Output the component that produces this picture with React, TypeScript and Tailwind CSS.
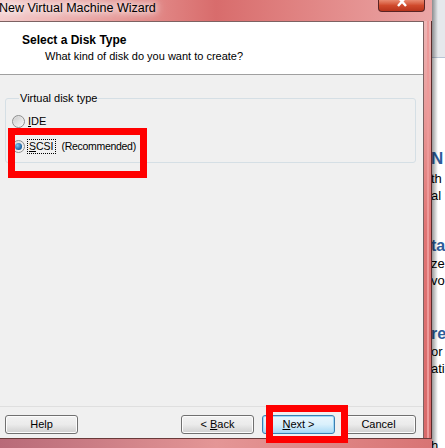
import React from 'react';

function Radio({ checked }: { checked?: boolean }) {
  return (
    <span className="w-[13px] h-[13px] rounded-full border border-[#8e8f8f] bg-gradient-to-br from-[#d8d8d8] to-[#f8f8f8] flex items-center justify-center shrink-0">
      {checked ? (
        <span className="w-[7px] h-[7px] rounded-full bg-[radial-gradient(circle_at_35%_35%,#7cc4f0,#1a5f9e_70%)]" />
      ) : (
        <span className="w-[9px] h-[9px] rounded-full bg-gradient-to-br from-[#cfcfcf] to-[#f4f4f4]" />
      )}
    </span>
  );
}

function WinButton({ children, primary, className = '' }: { children: React.ReactNode; primary?: boolean; className?: string }) {
  return (
    <button
      className={
        'h-[19px] rounded-[3px] border text-[11px] leading-none text-black flex items-center justify-center ' +
        (primary
          ? 'border-[#3c7fb1] bg-gradient-to-b from-[#eaf6fd] via-[#d9f0fc] to-[#a7d9f5] shadow-[inset_0_0_0_1px_#9ed9f7] '
          : 'border-[#707070] bg-gradient-to-b from-[#f2f2f2] via-[#ebebeb] to-[#cfcfcf] shadow-[inset_0_0_0_1px_#fcfcfc] ') +
        className
      }
    >
      {children}
    </button>
  );
}

export default function App() {
  return (
    <div className="relative w-[445px] h-[448px] overflow-hidden flex bg-white font-['Liberation_Sans',Arial,sans-serif]">
      {/* wizard window */}
      <div className="w-[432px] h-full flex flex-col shrink-0">
        {/* title bar */}
        <div className="h-[21px] flex justify-between bg-gradient-to-r from-[#f4cccc] via-[#d86c6c] to-[#eba6a6]">
          <span className="text-[12.5px] leading-[16px] text-black -ml-[1px] [text-shadow:0_0_6px_#fff,0_0_10px_#fff,0_0_14px_#fff]">
            New Virtual Machine Wizard
          </span>
          <div className="mr-[7px] w-[47px] h-[12px] rounded-b-[4px] border border-t-0 border-[#5a2424] bg-gradient-to-b from-[#e98a70] via-[#d04a2c] to-[#b8341c] flex justify-center">
            <svg width="14" height="8" viewBox="0 0 14 8">
              <path d="M3 -3 L11 6 M11 -3 L3 6" stroke="#fff" strokeWidth="2.4" />
            </svg>
          </div>
        </div>

        <div className="flex flex-1">
          {/* client area */}
          <div className="w-[424px] flex flex-col bg-[#f0f0f0] border-t border-r border-[#7d6262]">
            <div className="h-[53px] bg-white border-b border-[#a0a0a0] pt-[10px]">
              <div className="ml-[22px] text-[12px] font-bold leading-[16px] text-black">Select a Disk Type</div>
              <div className="ml-[45px] mt-[1px] text-[11px] leading-[14px] text-black">What kind of disk do you want to create?</div>
            </div>

            <fieldset className="mt-[17px] ml-[5px] w-[411px] h-[71px] rounded-[3px] border border-[#d5dfe5] pl-[6px]">
              <legend className="ml-[7px] px-[1px] text-[11px] leading-[13px] text-black">Virtual disk type</legend>
              <div className="mt-[9px] flex items-center gap-[3px] h-[14px] text-[11px]">
                <Radio />
                <span><span className="underline">I</span>DE</span>
              </div>
              <div className="mt-[11px] flex items-center gap-[2px] h-[15px] text-[10.5px]">
                <Radio checked />
                <span className="border border-dotted border-black px-[1px] leading-[13px]"><span className="underline">S</span>CSI</span>
                <span className="ml-[4px] tracking-[-0.3px]">(Recommended)</span>
              </div>
            </fieldset>

            <div className="flex-1" />

            <div className="border-t border-[#dfdfdf] pt-[8px] pb-[4px] flex">
              <WinButton className="ml-[5px] w-[73px]">Help</WinButton>
              <div className="flex-1" />
              <WinButton className="w-[73px]">&lt; <span className="underline ml-[3px]">B</span>ack</WinButton>
              <WinButton primary className="ml-[8px] w-[73px]"><span className="underline">N</span>ext &gt;</WinButton>
              <WinButton className="ml-[6px] w-[75px] mr-[7px]">Cancel</WinButton>
            </div>
          </div>
          {/* right frame */}
          <div className="flex-1 border-r border-[#5a2c2c] bg-gradient-to-b from-[#eeb6b6] via-[#e07474] to-[#d86a6a] flex">
            <div className="w-[3px]" />
            <div className="w-[2px] bg-[#ee9a9a]" />
          </div>
        </div>

        {/* bottom frame */}
        <div className="h-[10px] border-t border-[#6a3a3a] bg-gradient-to-r from-[#b86a78] via-[#e49696] to-[#d87474]" />
      </div>

      {/* page behind the window */}
      <div className="relative flex-1 overflow-hidden text-[13px] text-black">
        <div className="h-[58px] bg-[#e6e8ec] border-b border-[#b8c4d4]" />
        <div className="-ml-[1px] flex flex-col whitespace-nowrap">
          <span className="mt-[92px] text-[17px] font-bold leading-[18px] text-[#2d5c9a]">N</span>
          <span className="mt-[2px] leading-[17px]">th</span>
          <span className="leading-[17px]">al r</span>
          <span className="mt-[33px] text-[16px] font-bold leading-[18px] text-[#2d5c9a]">tat</span>
          <span className="leading-[17px]">ze</span>
          <span className="leading-[17px]">vo</span>
          <span className="mt-[36px] text-[16px] font-bold leading-[18px] text-[#2d5c9a]">re</span>
          <span className="leading-[17px]">or</span>
          <span className="leading-[17px]">atic</span>
          <span className="mt-[60px] leading-[17px]">h</span>
        </div>
        <div className="absolute inset-y-0 left-0 w-[6px] bg-gradient-to-r from-black/40 to-transparent" />
      </div>

      {/* annotation boxes */}
      <div className="absolute left-[8px] top-[128px] w-[139px] h-[50px] border-[7px] border-[#ff0000]" />
      <div className="absolute left-[266px] top-[405px] w-[82px] h-[38px] border-[7px] border-[#ff0000]" />
    </div>
  );
}
